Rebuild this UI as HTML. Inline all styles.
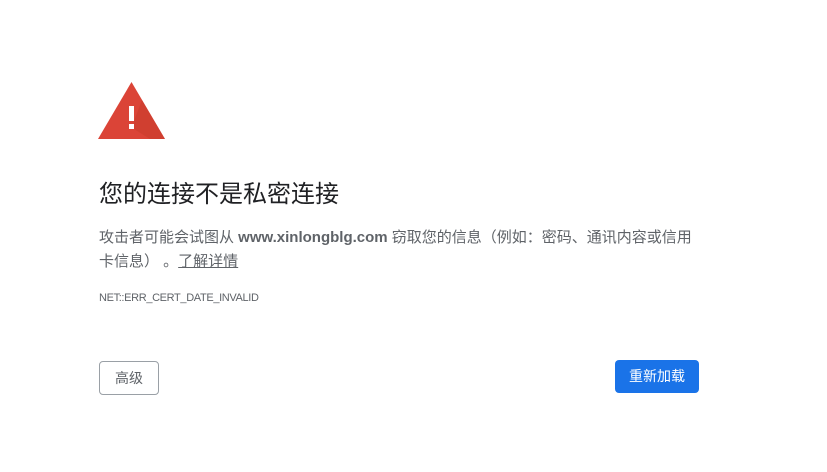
<!DOCTYPE html>
<html><head><meta charset="utf-8"><style>
body{margin:0;width:827px;height:472px;background:#fff;position:relative;font-family:"Liberation Sans","Noto Sans CJK SC",sans-serif;overflow:hidden}
.abs{position:absolute}
h1{position:absolute;left:99px;top:180px;margin:0;font-size:24px;font-weight:400;color:#202124;line-height:30px;white-space:nowrap}
.p{left:99px;top:226px;width:600px;font-size:15px;line-height:24px;color:#5f6368}
.p b{color:#5f6368}
.p u{color:#5f6368}
.code{left:99px;top:291px;font-size:11px;color:#5f6368;line-height:14px;letter-spacing:-0.35px}
.b1{left:99px;top:361px;width:58px;height:32px;border:1px solid #9aa0a6;border-radius:4px;color:#5f6368;font-size:14px;line-height:32px;text-align:center}
.b2{left:615px;top:360px;width:84px;height:33px;background:#1a73e8;border-radius:4px;color:#fff;font-size:14px;line-height:33px;text-align:center}
</style></head><body>
<svg class="abs" style="left:0;top:0" width="827" height="200">
<polygon points="131.5,82 165,139 98,139" fill="#db4437"/>
<polygon points="134,121 134,129 150,139 165,139 142,100" fill="#c53929" opacity="0.5"/>
<rect x="129" y="106" width="5" height="15" fill="#fff"/>
<rect x="129" y="124" width="5" height="5" fill="#fff"/>
</svg>
<h1>您的连接不是私密连接</h1>
<div class="abs p">攻击者可能会试图从 <b>www.xinlongblg.com</b> 窃取您的信息（例如：密码、通讯内容或信用<br>卡信息）&nbsp;。<u>了解详情</u></div>
<div class="abs code">NET::ERR_CERT_DATE_INVALID</div>
<div class="abs b1">高级</div>
<div class="abs b2">重新加载</div>
</body></html>
